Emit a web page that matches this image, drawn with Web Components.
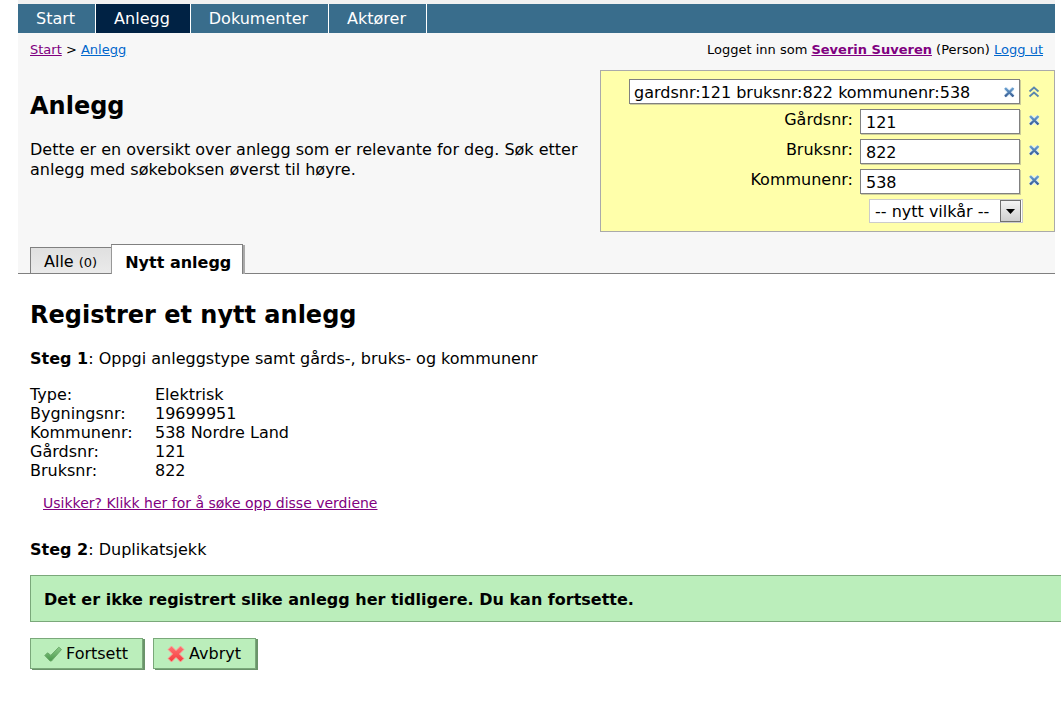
<!DOCTYPE html>
<html lang="no">
<head>
<meta charset="utf-8">
<title>Anlegg</title>
<style>
  body { margin: 0; background: #fff; color: #000; font: 16px/20px Verdana, "DejaVu Sans", sans-serif; }
</style>
</head>
<body>
<anlegg-app></anlegg-app>
<script>
  const define = (name, html, init) => customElements.define(name, class extends HTMLElement {
    constructor() {
      super();
      this.attachShadow({ mode: "open" });
    }
    connectedCallback() {
      this.shadowRoot.innerHTML = html;
      if (init) init(this, this.shadowRoot);
    }
  });

  define("nav-item", `
    <style>
      :host { display: block; border-right: 1px solid #fff; background: #396d8c; }
      :host([current]) { background: #002244; }
      a { display: block; padding: 1px 20px 0 18px; line-height: 28px; color: #fff; text-decoration: none; }
    </style>
    <a href="#"><slot></slot></a>`);

  define("main-nav", `
    <style>
      :host { display: block; border-top: 4px solid #f1f1f1; background: #396d8c; }
      nav { display: flex; }
    </style>
    <nav aria-label="Hovedmeny"><slot></slot></nav>`);

  define("status-bar", `
    <style>
      :host { display: flex; justify-content: space-between; gap: 24px; padding: 9px 12px 12px; font-size: 13px; line-height: 16px; }
      a { color: #06c; }
      a.visited { color: #800080; }
    </style>
    <nav aria-label="Sti"><a class="visited" href="#">Start</a> &gt; <a href="#">Anlegg</a></nav>
    <div>Logget inn som <a class="visited" href="#"><b>Severin Suveren</b></a> (Person) <a href="#">Logg ut</a></div>`);

  const cross = `<svg width="12" height="12" viewBox="0 0 12 12" aria-hidden="true">
      <defs><linearGradient id="b" gradientUnits="userSpaceOnUse" x1="0" y1="1" x2="0" y2="11"><stop offset="0" stop-color="#6fa8d8"/><stop offset="1" stop-color="#34588f"/></linearGradient></defs>
      <path d="M2.500 2.500 10 10M10 2.500 2.500 10" stroke="#dcebf7" stroke-width="4"/>
      <path d="M2 2 10.500 10.500M10.500 2 2 10.500" stroke="url(#b)" stroke-width="2.400"/></svg>`;
  const chevrons = `<svg width="12" height="12" viewBox="0 0 12 12" aria-hidden="true">
      <path d="M1.500 5.500 6 1.500 10.500 5.500M1.500 10.500 6 6.500 10.500 10.500" fill="none" stroke="#5b87ae" stroke-width="1.800"/></svg>`;

  define("icon-button", `
    <style>
      :host { display: block; }
      button { display: flex; align-items: center; justify-content: center; width: 12px; height: 22px; padding: 0; border: 0; background: none; }
    </style>
    <button type="button"></button>`, (host, root) => {
      const b = root.querySelector("button");
      b.setAttribute("aria-label", host.getAttribute("label"));
      b.innerHTML = host.getAttribute("icon") === "collapse" ? chevrons : cross;
    });

  define("filter-row", `
    <style>
      :host { display: flex; justify-content: flex-end; align-items: flex-start; }
      label { margin-right: 7px; padding-top: 1px; }
      input { box-sizing: border-box; width: 160px; height: 25px; margin: 0 8px 0 0; padding: 1px 5px 0; border: 1px solid #808080; background: #fff; box-shadow: 1px 1px 0 #cccc99; color: #000; font: inherit; }
    </style>
    <label for="value"></label><input id="value" type="text"><icon-button label="Fjern vilkår"></icon-button>`,
    (host, root) => {
      root.querySelector("label").textContent = host.getAttribute("label") + ":";
      root.querySelector("input").setAttribute("value", host.getAttribute("value"));
    });

  define("search-panel", `
    <style>
      :host { display: flex; flex-direction: column; gap: 5px; box-sizing: border-box; width: 455px; flex: none; padding: 8px 14px 8px 28px; border: 1px solid #aaa; background: #ffa; }
      .query { display: flex; align-items: center; gap: 8px; }
      .box { display: flex; flex: 1; align-items: center; box-sizing: border-box; height: 25px; padding-right: 4px; border: 1px solid #808080; background: #fff; box-shadow: 1px 1px 0 #cccc99; }
      .box input { flex: 1; min-width: 0; height: 23px; box-sizing: border-box; margin: 0; padding: 1px 4px 0; border: 0; outline: 0; background: none; color: #000; font: inherit; }
      .add { position: relative; align-self: flex-end; margin-right: 17px; }
      select { display: block; appearance: none; box-sizing: border-box; width: 154px; height: 24px; margin: 0; padding: 1px 24px 0 5px; border: 1px solid #ccc; border-radius: 0; background: #fff; color: #000; font: inherit; }
      .arrow { position: absolute; top: 1px; right: 2px; bottom: 1px; width: 21px; box-sizing: border-box; border: 1px solid #707070; background: linear-gradient(#f4f4f4, #cfcfcf); display: flex; align-items: center; justify-content: center; pointer-events: none; }
    </style>
    <div class="query">
      <div class="box"><input type="text" aria-label="Søk" value="gardsnr:121 bruksnr:822 kommunenr:538"><icon-button label="Tøm søk"></icon-button></div>
      <icon-button icon="collapse" label="Skjul vilkår"></icon-button>
    </div>
    <slot></slot>
    <div class="add">
      <select aria-label="Nytt vilkår"><option>-- nytt vilkår --</option></select>
      <span class="arrow"><svg width="9" height="5" viewBox="0 0 9 5" aria-hidden="true"><path d="M0 0h9L4.500 5z"/></svg></span>
    </div>`);

  define("page-intro", `
    <style>
      :host { display: flex; align-items: flex-start; padding-left: 12px; }
      .text { flex: 1; padding-right: 12px; }
      h1 { margin: 21px 0 19px; font-size: 24px; line-height: 30px; }
      p { margin: 0; }
    </style>
    <div class="text"><h1>Anlegg</h1><p>Dette er en oversikt over anlegg som er relevante for deg. Søk etter anlegg med søkeboksen øverst til høyre.</p></div>
    <slot></slot>`);

  define("tab-strip", `
    <style>
      :host { display: block; padding: 12px 12px 0; border-bottom: 1px solid #808080; }
      nav { display: flex; align-items: flex-end; }
    </style>
    <nav aria-label="Faner"><slot></slot></nav>`);

  define("tab-item", `
    <style>
      :host { display: block; border: 1px solid #808080; border-width: 1px 0 0 1px; background: linear-gradient(#e0e0e0, #eaeaea); }
      a { display: block; padding: 4px 14px 1px 13px; line-height: 20px; color: #000; text-decoration: none; }
      ::slotted(small) { font-size: 13px; line-height: 13px; }
      :host([current]) { margin-bottom: -1px; border-right-width: 1px; background: #fff; box-shadow: 2px 1px 0 #aaa; clip-path: inset(0 -2px 0 0); font-weight: bold; }
      :host([current]) a { padding: 8px 11px 1px 13px; }
    </style>
    <a href="#"><slot></slot></a>`);

  define("fact-list", `
    <style>
      :host { display: block; margin-top: 16px; }
      table { border-collapse: collapse; }
      th, td { padding: 0; font-weight: normal; text-align: left; line-height: 19px; }
      th { width: 125px; }
    </style>
    <table></table>`, (host, root) => {
      const rows = [["Type", "Elektrisk"], ["Bygningsnr", "19699951"], ["Kommunenr", "538 Nordre Land"], ["Gårdsnr", "121"], ["Bruksnr", "822"]];
      root.querySelector("table").innerHTML = rows.map(([k, v]) => `<tr><th scope="row">${k}:</th><td>${v}</td></tr>`).join("");
    });

  define("notice-box", `
    <style>
      :host { display: block; margin: 15px -6px 16px 0; padding: 14px 13px 12px; border: 1px solid #7aa87a; border-right: 0; background: #bbeebb; font-weight: bold; line-height: 19px; }
    </style>
    <slot></slot>`);

  define("action-button", `
    <style>
      :host { display: block; }
      button { display: flex; align-items: center; gap: 4px; height: 31px; padding: 0 14px 0 13px; border: 1px solid #7aa87a; background: #bbeebb; box-shadow: 2px 1px 0 #6a946a; color: #000; font: inherit; }
      svg { display: block; flex: none; }
    </style>
    <button type="button"><span class="icon"></span><slot></slot></button>`, (host, root) => {
      root.querySelector(".icon").innerHTML = host.getAttribute("icon") === "ok"
        ? `<svg width="18" height="16" viewBox="0 0 18 16" aria-hidden="true"><defs><linearGradient id="g" x1="0" y1="0" x2="0" y2="1"><stop offset="0" stop-color="#8ac988"/><stop offset="1" stop-color="#4a984c"/></linearGradient></defs>
            <path d="M.8 9.500 3.500 6.800 6.800 9.300 14.800 1.200 17.500 3.500 7.500 15H6z" fill="url(#g)" stroke="#6cab6a" stroke-linejoin="round"/></svg>`
        : `<svg width="18" height="18" viewBox="0 0 18 18" aria-hidden="true"><defs><linearGradient id="r" x1="0" y1="0" x2="0" y2="1"><stop offset="0" stop-color="#ff7474"/><stop offset="1" stop-color="#f53a3a"/></linearGradient></defs>
            <path d="M4.500 1 9 5.500 13.500 1 17 4.500 12.500 9 17 13.500 13.500 17 9 12.500 4.500 17 1 13.500 5.500 9 1 4.500z" fill="url(#r)" stroke="#f9a8a0" stroke-linejoin="round"/></svg>`;
    });

  define("register-form", `
    <style>
      :host { display: block; padding: 26px 0 0 12px; }
      h2 { margin: 0 0 19px; font-size: 24px; line-height: 30px; }
      p { margin: 0; }
      .help { margin: 13px 0 27px 13px; font-size: 14px; }
      .help a { color: #800080; }
      .actions { display: flex; gap: 10px; }
    </style>
    <h2>Registrer et nytt anlegg</h2>
    <p><b>Steg 1</b>: Oppgi anleggstype samt gårds-, bruks- og kommunenr</p>
    <fact-list></fact-list>
    <p class="help"><a href="#">Usikker? Klikk her for å søke opp disse verdiene</a></p>
    <p><b>Steg 2</b>: Duplikatsjekk</p>
    <notice-box>Det er ikke registrert slike anlegg her tidligere. Du kan fortsette.</notice-box>
    <div class="actions"><action-button icon="ok">Fortsett</action-button><action-button icon="cancel">Avbryt</action-button></div>`);

  define("anlegg-app", `
    <style>
      :host { display: block; padding: 0 6px 24px 18px; overflow: hidden; }
      header { background: #f7f7f7; }
    </style>
    <header>
      <main-nav><nav-item>Start</nav-item><nav-item current>Anlegg</nav-item><nav-item>Dokumenter</nav-item><nav-item>Aktører</nav-item></main-nav>
      <status-bar></status-bar>
      <page-intro>
        <search-panel>
          <filter-row label="Gårdsnr" value="121"></filter-row>
          <filter-row label="Bruksnr" value="822"></filter-row>
          <filter-row label="Kommunenr" value="538"></filter-row>
        </search-panel>
      </page-intro>
      <tab-strip><tab-item>Alle <small>(0)</small></tab-item><tab-item current>Nytt anlegg</tab-item></tab-strip>
    </header>
    <main><register-form></register-form></main>`);
</script>
</body>
</html>
